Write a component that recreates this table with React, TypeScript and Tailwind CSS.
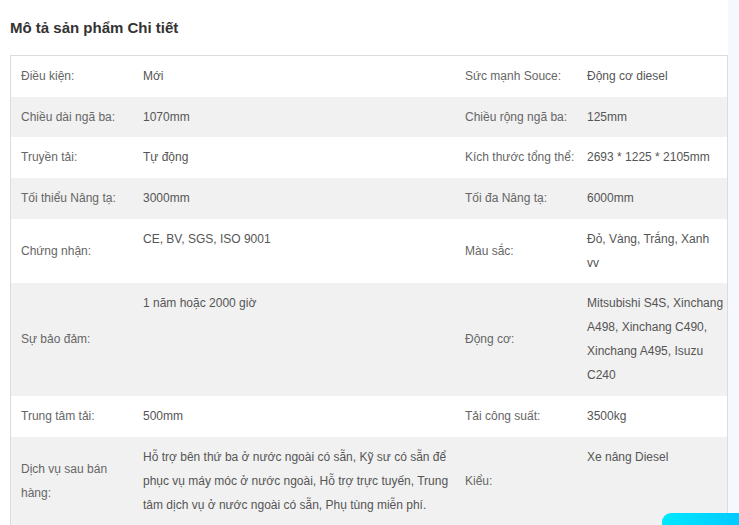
import React from "react";

interface SpecRow {
  label1: string;
  value1: string;
  label2: string;
  value2: string;
}

// values use \n where the original page wraps
const rows: SpecRow[] = [
  { label1: "Điều kiện:", value1: "Mới", label2: "Sức mạnh Souce:", value2: "Động cơ diesel" },
  { label1: "Chiều dài ngã ba:", value1: "1070mm", label2: "Chiều rộng ngã ba:", value2: "125mm" },
  { label1: "Truyền tải:", value1: "Tự động", label2: "Kích thước tổng thể:", value2: "2693 * 1225 * 2105mm" },
  { label1: "Tối thiểu Nâng tạ:", value1: "3000mm", label2: "Tối đa Nâng tạ:", value2: "6000mm" },
  { label1: "Chứng nhận:", value1: "CE, BV, SGS, ISO 9001", label2: "Màu sắc:", value2: "Đỏ, Vàng, Trắng, Xanh\nvv" },
  {
    label1: "Sự bảo đảm:",
    value1: "1 năm hoặc 2000 giờ",
    label2: "Động cơ:",
    value2: "Mitsubishi S4S, Xinchang A498, Xinchang C490, Xinchang A495, Isuzu C240",
  },
  { label1: "Trung tâm tải:", value1: "500mm", label2: "Tải công suất:", value2: "3500kg" },
  {
    label1: "Dịch vụ sau bán hàng:",
    value1:
      "Hỗ trợ bên thứ ba ở nước ngoài có sẵn, Kỹ sư có sẵn để phục vụ máy móc ở nước ngoài, Hỗ trợ trực tuyến, Trung tâm dịch vụ ở nước ngoài có sẵn, Phụ tùng miễn phí.",
    label2: "Kiểu:",
    value2: "Xe nâng Diesel",
  },
];

const App: React.FC = () => {
  return (
    <div
      className="relative flex h-[525px] w-[739px] overflow-hidden bg-white text-[12px] leading-6 text-[#666]"
      style={{ fontFamily: '"Liberation Sans", Arial, sans-serif' }}
    >
      <div className="w-[728px] shrink-0 pl-[10px]">
        <h2 className="pt-[18px] text-[15px] font-bold leading-5 text-[#333]">
          Mô tả sản phẩm Chi tiết
        </h2>
        <div className="mt-[17px] w-[718px] border border-[#dcdcdc]">
          {rows.map((row, i) => (
            <div
              key={row.label1}
              className={`grid grid-cols-[122px_322px_122px_1fr] ${
                i % 2 === 1 ? "bg-[#f1f1f1]" : "bg-white"
              }`}
            >
              <div className="self-center pl-[10px] pr-[10px] pt-2 pb-[8.7px]">{row.label1}</div>
              <div className="pl-[10px] pt-2 pb-[8.7px] text-[#555]">{row.value1}</div>
              <div className="self-center pl-[10px] pt-2 pb-[8.7px]">{row.label2}</div>
              <div className="whitespace-pre-line pl-[10px] pt-2 pb-[8.7px] text-[#555]">{row.value2}</div>
            </div>
          ))}
        </div>
      </div>
      <div className="flex-1 bg-[#f5f8fd]" />
      <div className="absolute left-[662px] top-[513px] h-[30px] w-[90px] rounded-tl-[9px] bg-gradient-to-r from-[#00e8ff] to-[#00c4ff]" />
    </div>
  );
};

export default App;
